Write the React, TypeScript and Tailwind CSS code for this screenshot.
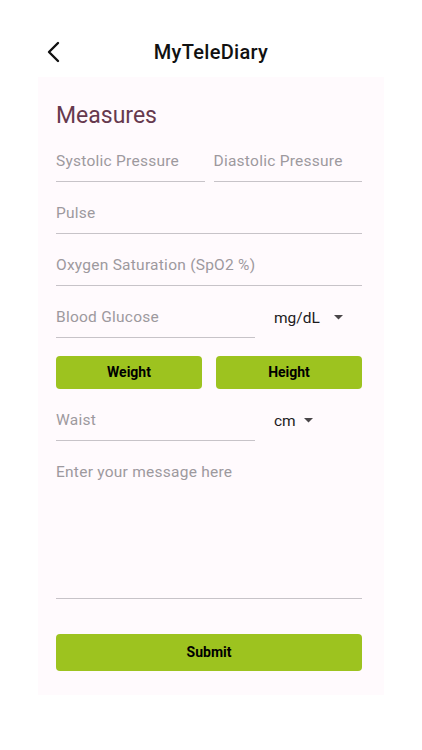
import React from 'react';

function Field({ label, className = '' }: { label: string; className?: string }) {
  return (
    <div className={`pt-[21px] pb-[10px] border-b border-[#c7c3c8] ${className}`}>
      <div className="text-[15.5px] leading-[20px] text-[#9d999e] tracking-[0.25px]">{label}</div>
    </div>
  );
}

function Unit({ label, gap }: { label: string; gap: string }) {
  return (
    <div className="flex items-center pt-[21px] pb-[10px]">
      <span className="text-[15.5px] leading-[20px] text-[#1d1b1e]">{label}</span>
      <svg width="9" height="5" viewBox="0 0 9 5" className={gap}>
        <path d="M0 0 L9 0 L4.5 4.5 Z" fill="#4a4649" />
      </svg>
    </div>
  );
}

export default function App() {
  return (
    <div className="w-[422px] h-[750px] bg-white" style={{ fontFamily: 'Roboto, "Noto Sans", sans-serif' }}>
      <header className="relative h-[32px] mt-[36px] flex items-center justify-center">
        <svg width="14" height="22" viewBox="0 0 14 22" className="absolute left-[46px] top-[5px]">
          <path d="M12 2 L3 11 L12 20" fill="none" stroke="#111" strokeWidth="2.4" strokeLinecap="round" strokeLinejoin="round" />
        </svg>
        <h1 className="text-[20px] leading-[24px] text-[#111] font-medium tracking-[0.3px]">MyTeleDiary</h1>
      </header>

      <div className="ml-[38px] mt-[9px] w-[346px] bg-[#fffafd] pl-[18px] pr-[22px] pt-[25px] pb-[24px]">
        <h2 className="text-[23px] leading-[28px] text-[#66394e]">Measures</h2>

        <div className="grid grid-cols-2 gap-[9px]">
          <Field label="Systolic Pressure" />
          <Field label="Diastolic Pressure" />
        </div>
        <Field label="Pulse" />
        <Field label="Oxygen Saturation (SpO2 %)" />

        <div className="flex gap-[19px]">
          <Field label="Blood Glucose" className="w-[199px]" />
          <Unit label="mg/dL" gap="ml-[14px]" />
        </div>

        <div className="flex gap-[14px] mt-[18px]">
          <button className="flex-1 h-[33px] rounded-[4px] bg-[#9dc31f] text-[14px] font-bold text-black">Weight</button>
          <button className="flex-1 h-[33px] rounded-[4px] bg-[#9dc31f] text-[14px] font-bold text-black">Height</button>
        </div>

        <div className="flex gap-[19px]">
          <Field label="Waist" className="w-[199px]" />
          <Unit label="cm" gap="ml-[8px]" />
        </div>

        <div className="pt-[21px] h-[158px] border-b border-[#c7c3c8]">
          <div className="text-[15.5px] leading-[20px] text-[#9d999e] tracking-[0.25px]">Enter your message here</div>
        </div>

        <button className="mt-[35px] w-full h-[37px] rounded-[4px] bg-[#9dc31f] text-[14px] font-bold text-black">Submit</button>
      </div>
    </div>
  );
}
